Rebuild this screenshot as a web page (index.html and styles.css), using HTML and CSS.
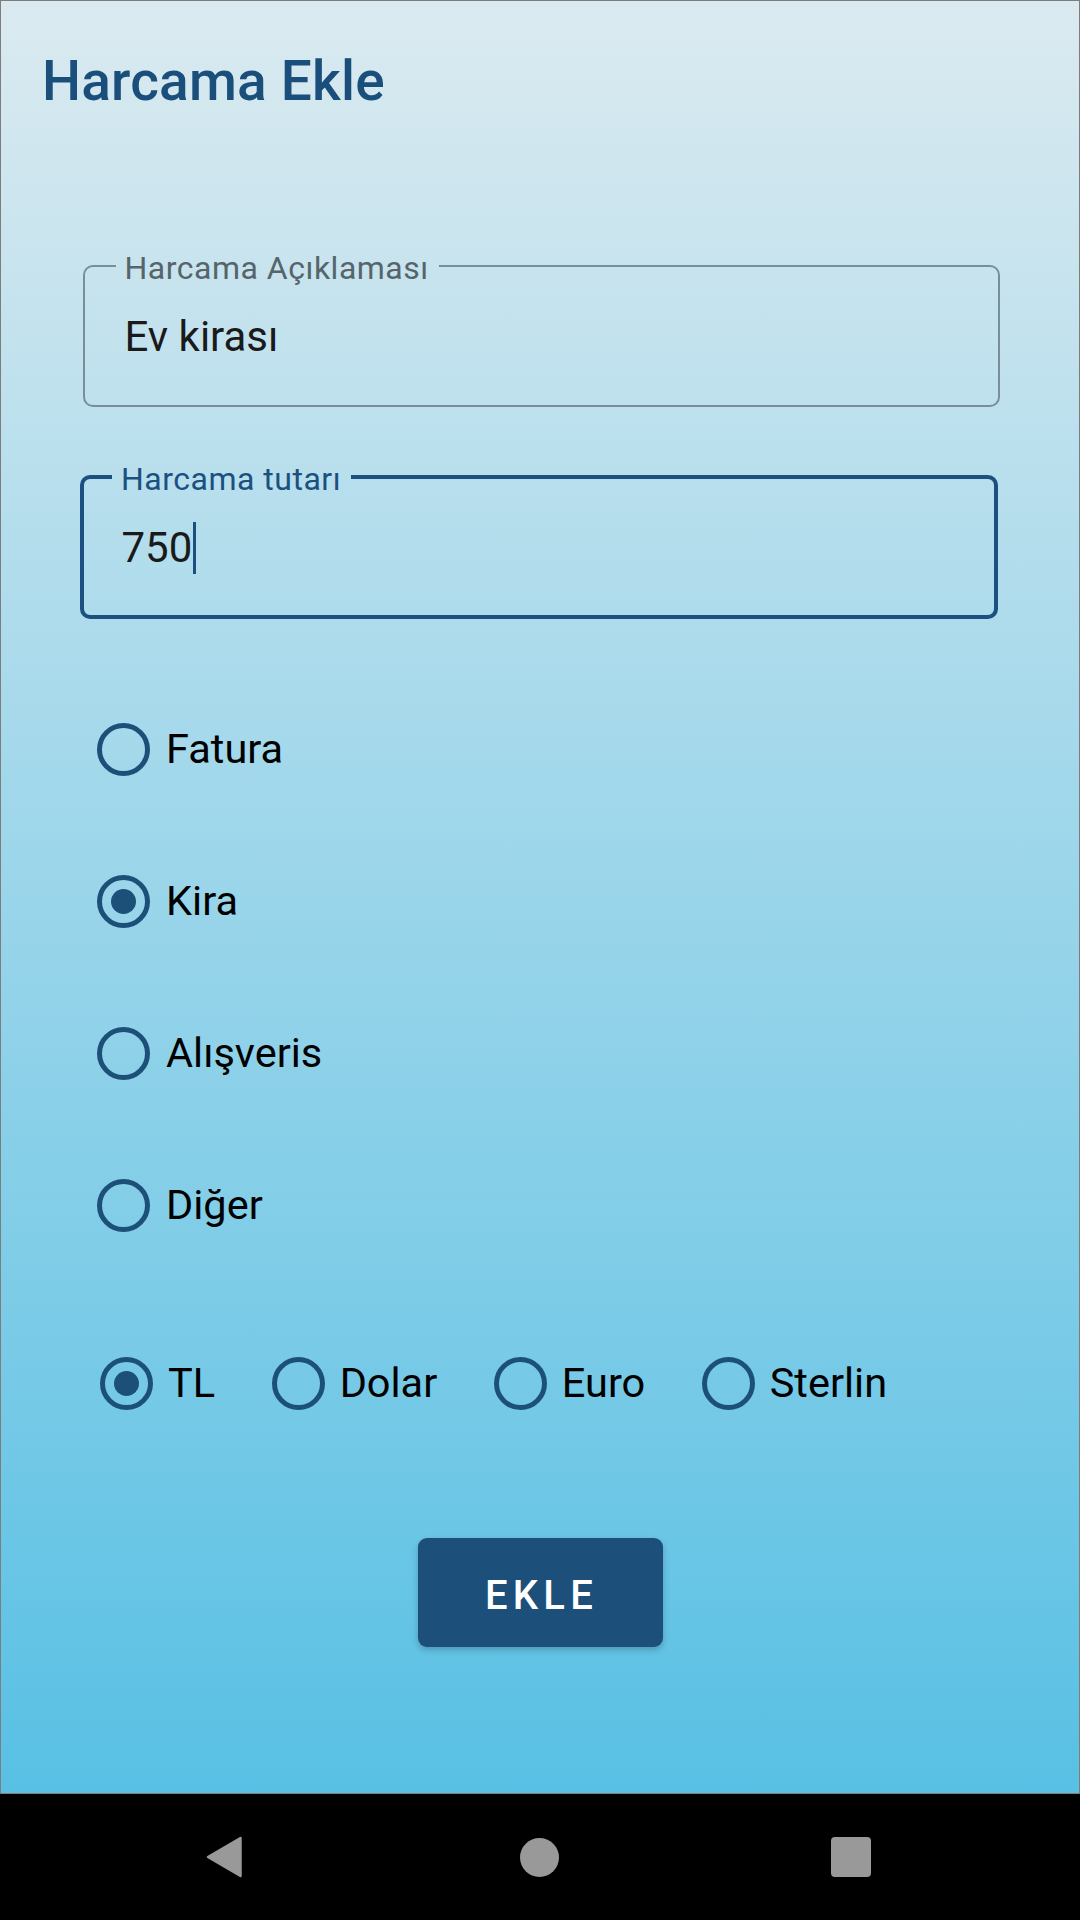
FILE: index.html
```html
<!DOCTYPE html>
<html lang="tr">
<head>
<meta charset="utf-8">
<title>Harcama Ekle</title>
<link rel="stylesheet" href="styles.css">
</head>
<body>
<div class="screen">
  <main class="app">
    <h1 class="title">Harcama Ekle</h1>

    <fieldset class="field field-desc">
      <legend class="field-label">Harcama Açıklaması</legend>
      <div class="field-value">Ev kirası</div>
    </fieldset>

    <fieldset class="field field-amount">
      <legend class="field-label">Harcama tutarı</legend>
      <div class="field-value">750<span class="caret"></span></div>
    </fieldset>

    <div class="radio-list">
      <div class="radio-row"><span class="radio"></span><span class="radio-text">Fatura</span></div>
      <div class="radio-row"><span class="radio checked"></span><span class="radio-text">Kira</span></div>
      <div class="radio-row"><span class="radio"></span><span class="radio-text">Alışveris</span></div>
      <div class="radio-row"><span class="radio"></span><span class="radio-text">Diğer</span></div>
    </div>

    <div class="currency-row">
      <div class="currency-item"><span class="radio checked"></span><span class="radio-text">TL</span></div>
      <div class="currency-item"><span class="radio"></span><span class="radio-text">Dolar</span></div>
      <div class="currency-item"><span class="radio"></span><span class="radio-text">Euro</span></div>
      <div class="currency-item"><span class="radio"></span><span class="radio-text">Sterlin</span></div>
    </div>

    <div class="actions">
      <button class="btn" type="button">EKLE</button>
    </div>
  </main>

  <nav class="navbar">
    <span class="nav-back">
      <svg width="36" height="42" viewBox="0 0 36 42"><path d="M34.5 2 L34.5 40 L2 21 Z" fill="#999999" stroke="#999999" stroke-width="2.5" stroke-linejoin="round"/></svg>
    </span>
    <span class="nav-home"></span>
    <span class="nav-recent"></span>
  </nav>
</div>
</body>
</html>
```

FILE: styles.css
```css
* {
  box-sizing: border-box;
}

html, body {
  margin: 0;
  padding: 0;
}

body {
  width: 1080px;
  height: 1920px;
  font-family: Roboto, "Noto Sans", "Liberation Sans", sans-serif;
  background: #000;
}

.screen {
  width: 1080px;
  height: 1920px;
  display: flex;
  flex-direction: column;
}

.app {
  height: 1794px;
  border: 1px solid #7d7d7d;
  background: linear-gradient(180deg, #dbeaf0 0%, #58c0e4 100%);
  display: flex;
  flex-direction: column;
  align-items: flex-start;
}

.title {
  margin: 48px 0 0 0;
  padding-left: 41px;
  font-size: 55px;
  line-height: 64px;
  font-weight: 500;
  letter-spacing: 0.2px;
  color: #1b4f7b;
}

.field {
  margin: 0;
  min-inline-size: 0;
  border-style: solid;
  border-radius: 10px;
}

.field-desc {
  margin-top: 133px;
  margin-left: 82px;
  width: 917px;
  border-width: 2px;
  border-color: #788e98;
  padding: 26px 20px 43px 39.5px;
}

.field-amount {
  margin-top: 50px;
  margin-left: 79px;
  width: 918px;
  border-width: 4px;
  border-color: #1c5080;
  padding: 25px 20px 43px 37.5px;
}

.field-label {
  padding: 4px 10px 0 9px;
  font-size: 32px;
  line-height: 36px;
  font-weight: 400;
  letter-spacing: 0.5px;
}

.field-desc .field-label {
  margin-left: -9px;
  color: #56656c;
}

.field-amount .field-label {
  margin-left: -9.5px;
  color: #1c5080;
}

.field-value {
  height: 50px;
  font-size: 42px;
  line-height: 50px;
  color: #1a1a1a;
  white-space: nowrap;
}

.caret {
  display: inline-block;
  width: 3px;
  height: 52px;
  margin-left: 1px;
  background: #1c5080;
  vertical-align: -12px;
}

.radio-list {
  margin-top: 54px;
  margin-left: 96px;
  display: flex;
  flex-direction: column;
}

.radio-row {
  height: 152px;
  display: flex;
  align-items: center;
  gap: 16px;
}

.radio {
  position: relative;
  flex: none;
  width: 53px;
  height: 53px;
  border: 5px solid #1d5079;
  border-radius: 50%;
}

.radio.checked::after {
  content: "";
  position: absolute;
  left: 50%;
  top: 50%;
  width: 25px;
  height: 25px;
  margin: -12.5px 0 0 -12.5px;
  border-radius: 50%;
  background: #1d5079;
}

.radio-text {
  font-size: 41.5px;
  line-height: 48px;
  color: #000;
}

.currency-row {
  margin-top: 26px;
  margin-left: 99px;
  height: 152px;
  display: flex;
  align-items: center;
  gap: 56.5px;
}

.currency-item {
  display: flex;
  align-items: center;
  gap: 15px;
}

.actions {
  align-self: stretch;
  margin-top: 79px;
  display: flex;
  justify-content: center;
}

.btn {
  width: 245px;
  height: 109px;
  padding: 6px 0 0 3px;
  border: none;
  border-radius: 9px;
  background: #1c4f79;
  color: #fff;
  font-family: Roboto, "Noto Sans", "Liberation Sans", sans-serif;
  font-size: 40px;
  font-weight: 500;
  letter-spacing: 5.2px;
  box-shadow: 0 3px 6px rgba(0, 0, 0, 0.22);
  display: flex;
  align-items: center;
  justify-content: center;
}

.navbar {
  height: 126px;
  background: #000;
  display: flex;
  align-items: center;
  padding-left: 206px;
}

.nav-back {
  width: 36px;
  height: 42px;
  display: block;
}

.nav-back svg {
  display: block;
}

.nav-home {
  margin-left: 278px;
  width: 39px;
  height: 39px;
  border-radius: 50%;
  background: #999999;
}

.nav-recent {
  margin-left: 272px;
  width: 40px;
  height: 40px;
  border-radius: 4px;
  background: #999999;
}
```
